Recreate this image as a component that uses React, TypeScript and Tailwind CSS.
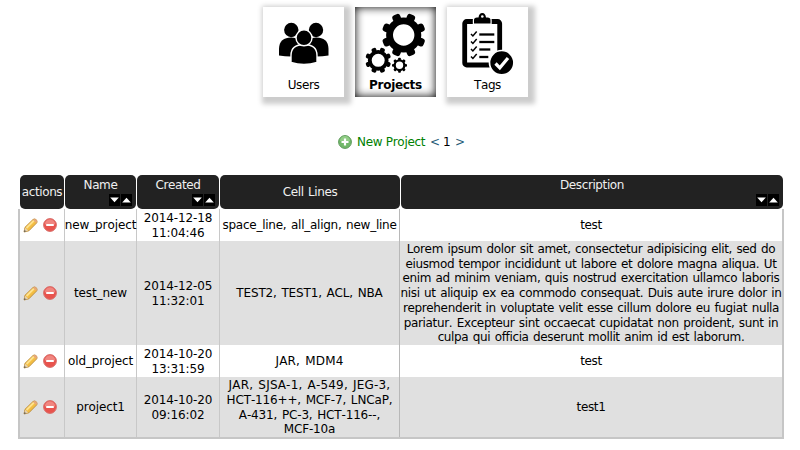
import type { ReactNode } from "react";

type GearProps = { cx: number; cy: number; r: number; hole: number; offset: number };

function Gear({ cx, cy, r, hole, offset }: GearProps) {
  const body = r * 0.8;
  const ring = (body + hole) / 2;
  return (
    <g transform={`translate(${cx} ${cy})`}>
      <circle r={ring} fill="none" stroke="#000" strokeWidth={body - hole} />
      {[0, 1, 2, 3, 4, 5, 6, 7].map((i) => (
        <rect
          key={i}
          x={-r * 0.19}
          y={-r}
          width={r * 0.38}
          height={r * 0.32}
          rx={r * 0.13}
          transform={`rotate(${i * 45 + offset})`}
        />
      ))}
    </g>
  );
}

function UsersIcon() {
  return (
    <svg className="h-[70px] w-[81px] shrink-0" viewBox="0 0 81 70">
      <circle cx="28.3" cy="23" r="7.2" />
      <circle cx="53" cy="23" r="7.2" />
      <path d="M16 48.500V42C16 34 21 30.500 28 30.500s12 3.500 12 11v7Q28 50.500 16 48.500Z" />
      <path d="M65.500 48.500V42C65.500 34 60.500 30.500 53.500 30.500s-12 3.500-12 11v7Q53.500 50.500 65.500 48.500Z" />
      <g stroke="#fff" strokeWidth="1.4">
        <path d="M28 55.500V48.500C28 41 33 37.500 41 37.500s13 3.500 13 11v7Q41 59.500 28 55.500Z" />
        <circle cx="41" cy="30.800" r="8" />
      </g>
    </svg>
  );
}

function ProjectsIcon() {
  return (
    <svg className="h-[70px] w-[81px] shrink-0" viewBox="0 0 81 70">
      <Gear cx={48.700} cy={28} r={22} hole={10.700} offset={22.500} />
      <Gear cx={23.200} cy={53.300} r={13} hole={6.500} offset={22.500} />
      <Gear cx={44.500} cy={58.300} r={7.500} hole={3.700} offset={0} />
    </svg>
  );
}

function TagsIcon() {
  return (
    <svg className="h-[70px] w-[81px] shrink-0" viewBox="0 0 81 70" fill="none">
      <rect x="17.700" y="14.500" width="35" height="43.500" rx="2" stroke="#000" strokeWidth="4.800" />
      <path
        d="M27 16.500V13q0-2.500 3-2.500h1.500C32 7.500 33 6 35.300 6S38.500 7.500 39 10.500h1.500q3 0 3 2.500v3.500Z"
        fill="#000"
        stroke="#fff"
        strokeWidth="2.400"
        paintOrder="stroke"
      />
      <circle cx="35.300" cy="9.500" r="1.300" fill="#fff" />
      {[27, 34.500, 42, 49.500].map((y, i) => (
        <g key={y} stroke="#000">
          <path d={`M24 ${y}l1.900 2 3.800-4.500`} strokeWidth="1.500" />
          <path d={`M32.300 ${y + 0.500}h${[15, 15, 11, 9][i]}`} strokeWidth="2.300" />
        </g>
      ))}
      <circle cx="54.700" cy="55.700" r="12.200" fill="#000" stroke="#fff" strokeWidth="1.700" />
      <path d="m48.500 56.500 4.300 4.300 8.200-9.800" stroke="#fff" strokeWidth="3.200" />
    </svg>
  );
}

function AddIcon() {
  return (
    <svg className="size-[14px] shrink-0" viewBox="0 0 14 14">
      <circle cx="7" cy="7" r="6.400" fill="#72b86a" stroke="#5d9a5a" />
      <path d="M2 6a5 5 0 0 1 10 0Z" fill="#91cc86" />
      <path d="M7 3.500v7M3.500 7h7" stroke="#fff" strokeWidth="2.200" />
    </svg>
  );
}

function PencilIcon() {
  return (
    <svg className="size-[15px] shrink-0" viewBox="0 0 15 15">
      <path d="M1 14 2 9.300 10 1.500q1.500-1.200 3.100.1t.7 3.200L5.900 12.800Z" fill="#f3bd42" stroke="#b98a3c" strokeWidth=".9" />
      <path d="m3.500 10 7.500-7.500" stroke="#ffe28c" strokeWidth="1.800" />
      <path d="m10.200 2 2.900 3 .8-.900q.400-1.400-.8-2.500t-2.300-.3Z" fill="#e7a77b" />
      <path d="M1 14 2.200 9.800l3 2.800Z" fill="#e5d1ae" />
      <path d="m1 14 .6-2 1.400 1.300Z" fill="#444" />
    </svg>
  );
}

function DeleteIcon() {
  return (
    <svg className="size-[14px] shrink-0" viewBox="0 0 14 14">
      <circle cx="7" cy="7" r="6.400" fill="#e8534d" stroke="#d7706c" />
      <path d="M1.800 6.500a5.200 5.200 0 0 1 10.400 0Z" fill="#f08680" />
      <rect x="3.200" y="5.900" width="7.600" height="2.200" rx=".4" fill="#fff" />
    </svg>
  );
}

function SortButtons() {
  return (
    <div className="flex gap-px self-end pr-1">
      <svg className="h-3 w-[11px] bg-black" viewBox="0 0 11 12">
        <path d="M1.200 3.500h8.600L5.500 8.300Z" fill="#fff" />
      </svg>
      <svg className="h-3 w-[11px] bg-black" viewBox="0 0 11 12">
        <path d="M1.200 8.500h8.600L5.500 3.700Z" fill="#fff" />
      </svg>
    </div>
  );
}

function Card({ label, active, children }: { label: string; active?: boolean; children: ReactNode }) {
  return (
    <div
      className={
        active
          ? "flex h-[90px] w-[81px] flex-col items-center shadow-[inset_0_0_10px_#000]"
          : "flex h-[90px] w-[81px] flex-col items-center bg-white shadow-[3px_3px_5px_4px_#ccc]"
      }
    >
      {children}
      <span
        className={
          active
            ? "text-[12px] leading-[16px] font-bold tracking-[-0.3px]"
            : "text-[12px] leading-[16px] tracking-[-0.4px]"
        }
      >
        {label}
      </span>
    </div>
  );
}

const columns = [
  { title: "actions", sortable: false },
  { title: "Name", sortable: true },
  { title: "Created", sortable: true },
  { title: "Cell Lines", sortable: false },
  { title: "Description", sortable: true },
];

const rows = [
  { name: "new_project", created: ["2014-12-18", "11:04:46"], lines: ["space_line, all_align, new_line"], desc: ["test"] },
  {
    name: "test_new",
    created: ["2014-12-05", "11:32:01"],
    lines: ["TEST2, TEST1, ACL, NBA"],
    desc: [
      "Lorem ipsum dolor sit amet, consectetur adipisicing elit, sed do",
      "eiusmod tempor incididunt ut labore et dolore magna aliqua. Ut",
      "enim ad minim veniam, quis nostrud exercitation ullamco laboris",
      "nisi ut aliquip ex ea commodo consequat. Duis aute irure dolor in",
      "reprehenderit in voluptate velit esse cillum dolore eu fugiat nulla",
      "pariatur. Excepteur sint occaecat cupidatat non proident, sunt in",
      "culpa qui officia deserunt mollit anim id est laborum.",
    ],
  },
  { name: "old_project", created: ["2014-10-20", "13:31:59"], lines: ["JAR, MDM4"], desc: ["test"] },
  {
    name: "project1",
    created: ["2014-10-20", "09:16:02"],
    lines: ["JAR, SJSA-1, A-549, JEG-3,", "HCT-116++, MCF-7, LNCaP,", "A-431, PC-3, HCT-116--,", "MCF-10a"],
    desc: ["test1"],
  },
];

function Cell({ lines, className }: { lines: string[]; className: string }) {
  return (
    <div className={`flex flex-col items-center justify-center pt-px ${className}`}>
      {lines.map((l) => (
        <span
          key={l}
          className={
            l.startsWith("JAR")
              ? "leading-[14.67px] tracking-[0.2px] whitespace-nowrap"
              : "leading-[14.67px] whitespace-nowrap"
          }
        >
          {l}
        </span>
      ))}
    </div>
  );
}

export default function App() {
  return (
    <div className="h-[450px] w-[800px] overflow-hidden bg-white font-['DejaVu_Sans',sans-serif] text-[12px] text-black [font-kerning:none]">
      <nav className="flex gap-[11px] pt-[7px] pl-[263px]">
        <Card label="Users">
          <UsersIcon />
        </Card>
        <Card label="Projects" active>
          <ProjectsIcon />
        </Card>
        <Card label="Tags">
          <TagsIcon />
        </Card>
      </nav>
      <div className="mt-[37px] flex h-4 items-center pl-[338px] whitespace-nowrap">
        <AddIcon />
        <span className="ml-[5px] w-[69px] tracking-[-0.3px] text-[#008000]">New Project</span>
        <span className="ml-1 w-[10px] text-[#265c78]">&lt;</span>
        <span className="ml-[3px] w-[8px]">1</span>
        <span className="ml-1 text-[#265c78]">&gt;</span>
      </div>
      <div className="mt-[25px] ml-[18px] w-[766px]">
        <div className="grid h-[34px] grid-cols-[45px_72px_83px_181px_383px] pl-[2px] tracking-[-0.4px] text-[#f0f0f0]">
          {columns.map((c) => (
            <div
              key={c.title}
              className="mr-px flex flex-col items-center justify-center rounded-[5px] bg-[#222]"
            >
              <span className={c.sortable ? "-mt-px pb-px leading-[15px]" : "pt-px leading-[15px] [word-spacing:1px]"}>{c.title}</span>
              {c.sortable && <SortButtons />}
            </div>
          ))}
        </div>
        <div className="border-x-2 border-b-2 border-[#c6c6c6]">
          {rows.map((r, i) => (
            <div
              key={r.name}
              className={[
                "grid h-8 grid-cols-[45px_72px_83px_180px_382px] bg-white",
                "grid h-[104px] grid-cols-[45px_72px_83px_180px_382px] bg-[#e0e0e0]",
                "grid h-8 grid-cols-[45px_72px_83px_180px_382px] bg-white",
                "grid h-[60px] grid-cols-[45px_72px_83px_180px_382px] bg-[#e0e0e0]",
              ][i]}
            >
              <div className="flex items-center gap-[5px] border-r border-[#c8c8c8] pl-[3px]">
                <PencilIcon />
                <DeleteIcon />
              </div>
              <Cell lines={[r.name]} className="border-r border-[#c8c8c8] tracking-[-0.1px]" />
              <Cell lines={r.created} className="border-r border-[#c8c8c8] tracking-[-0.1px]" />
              <Cell
                lines={r.lines}
                className={
                  i === 0
                    ? "border-r border-[#b8b8b8] tracking-[-0.25px] [word-spacing:1px]"
                    : "border-r border-[#b8b8b8] tracking-[-0.15px] [word-spacing:1px]"
                }
              />
              <Cell lines={r.desc} className="tracking-[-0.36px] [word-spacing:1px]" />
            </div>
          ))}
        </div>
      </div>
    </div>
  );
}
